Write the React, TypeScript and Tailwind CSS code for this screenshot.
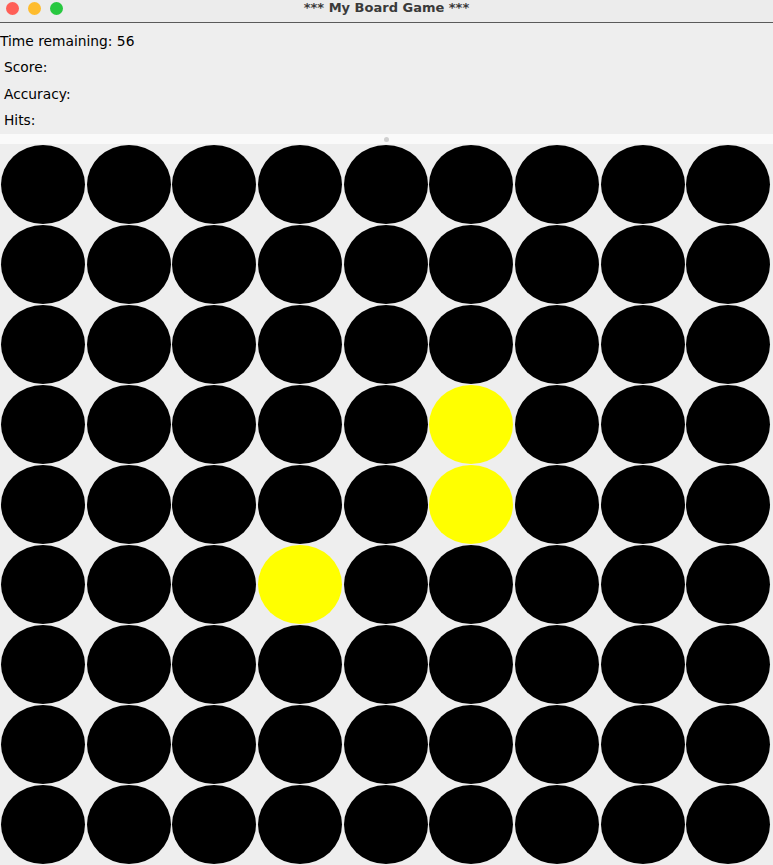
import React from "react";

const ROWS = 9;
const COLS = 9;
const lit = new Set(["3-5", "4-5", "5-3"]);

const TitleBar: React.FC = () => (
  <div className="relative h-[23px] bg-[#ececec] border-b border-[#5a5a5a] flex items-start pt-[2px]">
    <div className="flex gap-[9px] pl-[6px]">
      <span className="w-[13px] h-[13px] rounded-full bg-[#ff5f57]" />
      <span className="w-[13px] h-[13px] rounded-full bg-[#febc2e]" />
      <span className="w-[13px] h-[13px] rounded-full bg-[#28c840]" />
    </div>
    <div className="absolute inset-x-0 top-0 h-[16px] flex items-center justify-center text-[13px] font-bold text-[#3a3a3a]">
      *** My Board Game ***
    </div>
  </div>
);

export default function App() {
  return (
    <div className="w-[773px] h-[865px] overflow-hidden bg-[#eeeeee] font-['DejaVu_Sans',sans-serif]">
      <TitleBar />

      {/* status labels */}
      <div className="h-[111px] text-[13.8px] text-black flex flex-col pt-[5px]">
        <div className="h-[26.5px] shrink-0 flex items-center">Time remaining: 56</div>
        <div className="h-[26.5px] shrink-0 flex items-center pl-[4px]">Score:</div>
        <div className="h-[26.5px] shrink-0 flex items-center pl-[4px]">Accuracy:</div>
        <div className="h-[26.5px] shrink-0 flex items-center pl-[4px]">Hits:</div>
      </div>

      {/* split pane divider */}
      <div className="h-[10px] bg-[#fafafa] flex items-center justify-center">
        <span className="w-[5px] h-[5px] rounded-full bg-[#d0d0d0]" />
      </div>

      {/* board */}
      <div className="grid grid-cols-9 w-[771px]">
        {Array.from({ length: ROWS * COLS }).map((_, i) => {
          const r = Math.floor(i / COLS);
          const c = i % COLS;
          return (
            <div key={i} className="h-[80px] pt-[1px] pl-[1px]">
              <div
                className={
                  "w-[84px] h-[79px] rounded-[50%] " +
                  (lit.has(`${r}-${c}`) ? "bg-[#ffff00]" : "bg-black")
                }
              />
            </div>
          );
        })}
      </div>
    </div>
  );
}
